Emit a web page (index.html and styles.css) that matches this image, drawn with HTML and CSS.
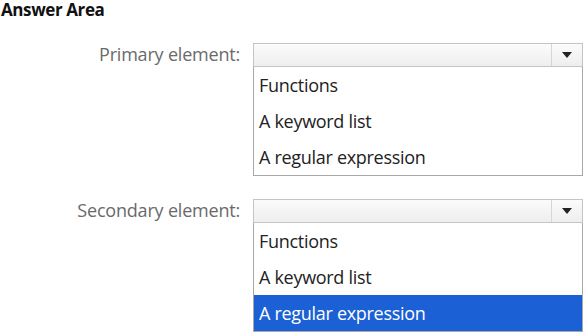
FILE: index.html
```html
<!DOCTYPE html>
<html lang="en">
<head>
  <meta charset="UTF-8" />
  <title>Answer Area</title>
  <link rel="stylesheet" href="styles.css">
</head>
<body>
  <h1 class="titulo">Answer Area</h1>

  <div class="fila">
    <label class="etiqueta">Primary element:</label>
    <div class="combo">
      <div class="combo-cabecera">
        <span class="flecha"></span>
      </div>
      <ul class="opciones">
        <li>Functions</li>
        <li>A keyword list</li>
        <li>A regular expression</li>
      </ul>
    </div>
  </div>

  <div class="fila segunda">
    <label class="etiqueta">Secondary element:</label>
    <div class="combo">
      <div class="combo-cabecera">
        <span class="flecha"></span>
      </div>
      <ul class="opciones">
        <li>Functions</li>
        <li>A keyword list</li>
        <li class="activo">A regular expression</li>
      </ul>
    </div>
  </div>
</body>
</html>
```

FILE: styles.css
```css
body {
  margin: 0;
  padding: 0;
  background: #fff;
  font-family: "Open Sans", "Noto Sans", sans-serif;
  color: #222;
}

.titulo {
  margin: 0;
  padding: 1px 0 0 1px;
  font-size: 17px;
  font-weight: bold;
  line-height: 17px;
  color: #111;
  letter-spacing: -0.4px;
}

.fila {
  display: flex;
  margin-top: 25px;
}

.segunda {
  margin-top: 23px;
}

.etiqueta {
  width: 253px;
  padding-right: 13px;
  box-sizing: border-box;
  text-align: right;
  font-size: 18px;
  line-height: 23px;
  color: #6a6a6a;
  letter-spacing: -0.2px;
}

.combo {
  width: 330px;
}

.combo-cabecera {
  height: 22px;
  border: 1px solid #c4c4c4;
  background: linear-gradient(#fbfbfb, #eeeeee);
  display: flex;
  justify-content: flex-end;
}

.flecha {
  width: 30px;
  border-left: 1px solid #d6d6d6;
  position: relative;
}

.flecha::after {
  content: "";
  position: absolute;
  left: 10px;
  top: 8px;
  border-left: 5px solid transparent;
  border-right: 5px solid transparent;
  border-top: 6px solid #222;
}

.opciones {
  list-style: none;
  margin: 0;
  padding: 0;
  border: 1px solid #a8a8a8;
  border-top: none;
  background: #fff;
}

.opciones li {
  height: 36px;
  line-height: 36px;
  padding-left: 5px;
  font-size: 18px;
  color: #222;
  letter-spacing: -0.3px;
}

.opciones li.activo {
  background: #1b60d4;
  color: #fff;
}
```
